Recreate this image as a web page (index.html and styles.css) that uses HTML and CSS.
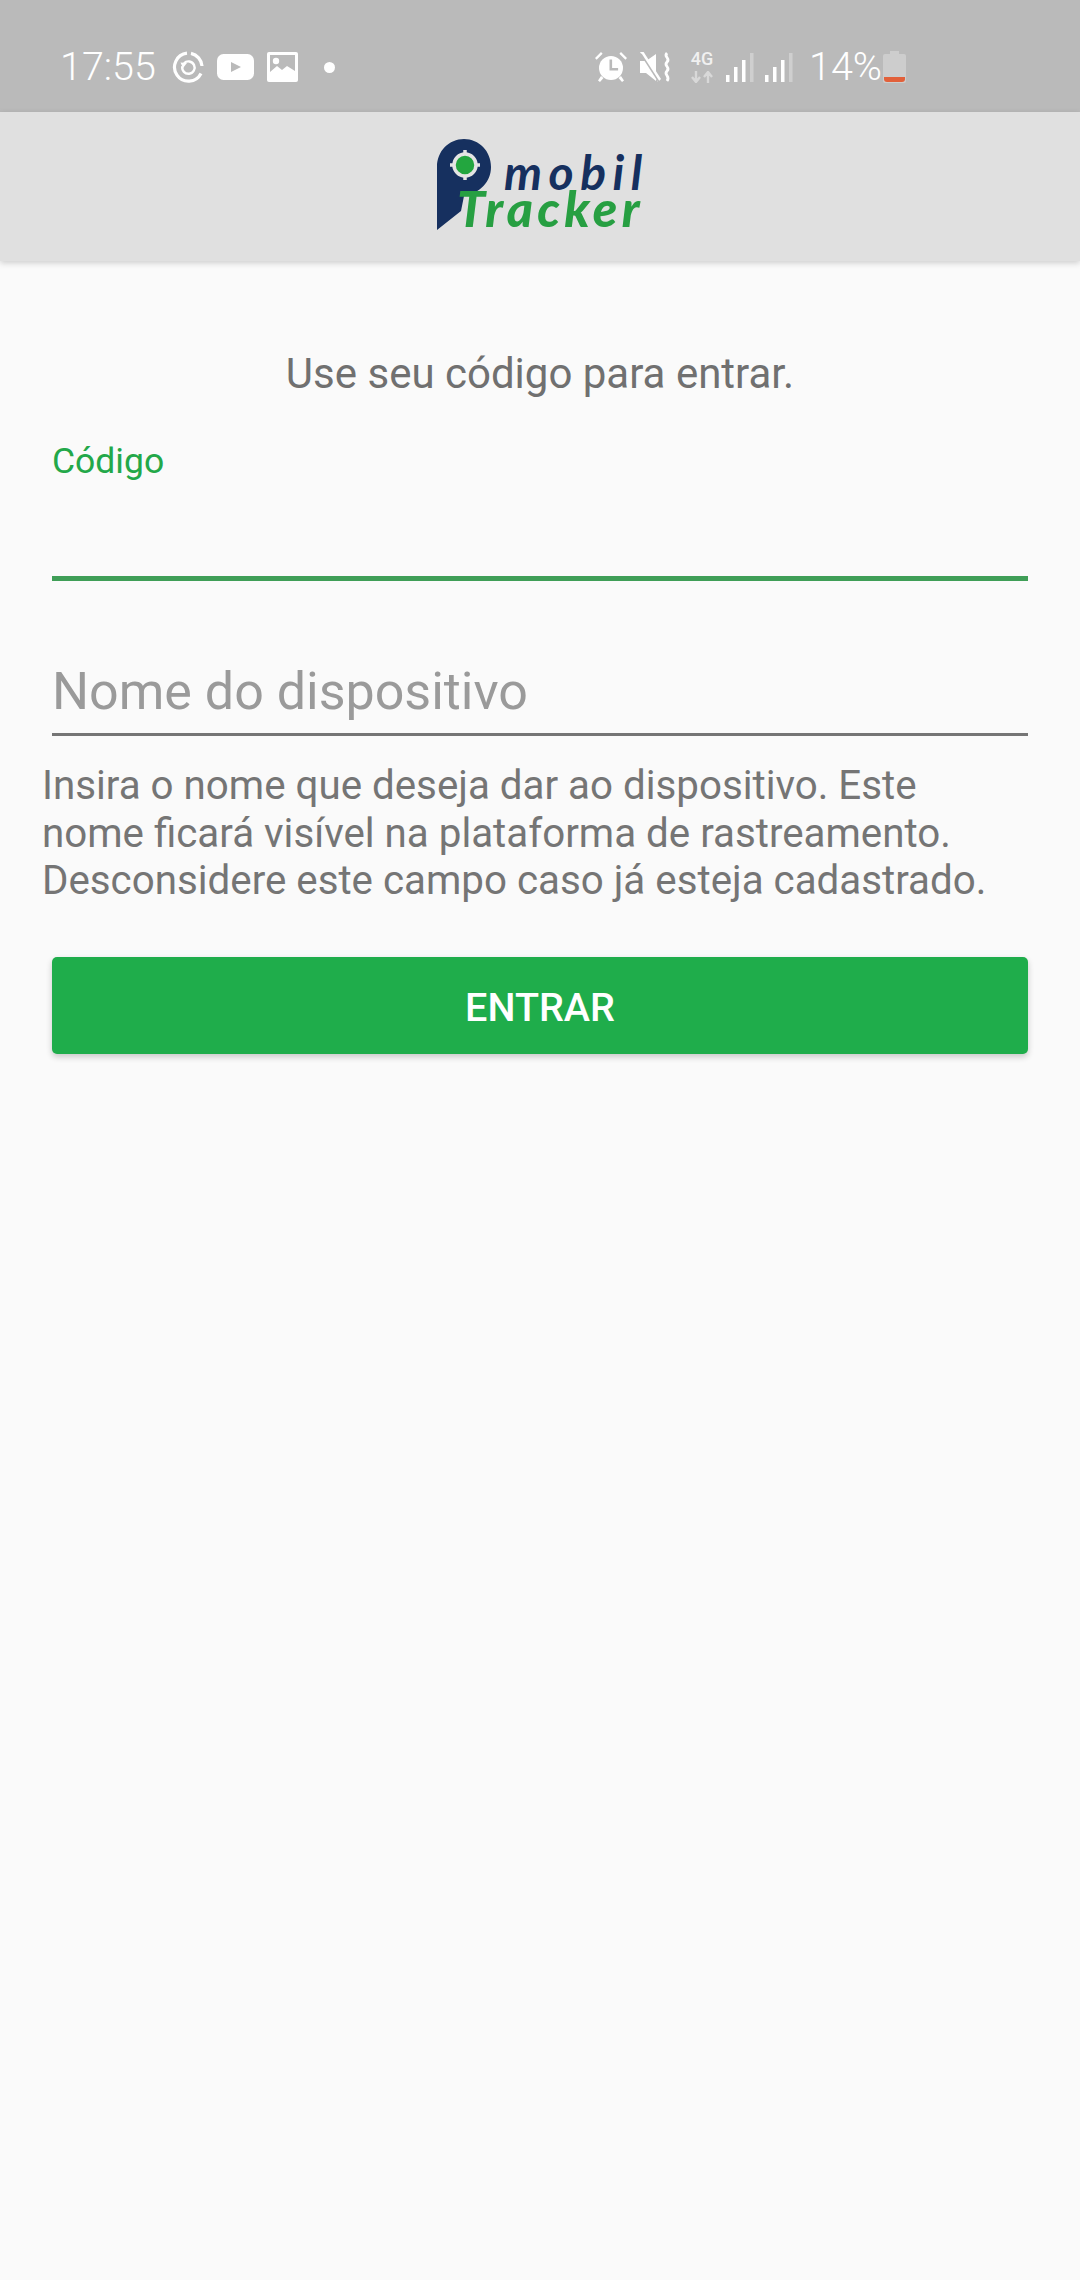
FILE: index.html
```html
<!DOCTYPE html>
<html lang="pt">
<head>
<meta charset="utf-8">
<title>mobil Tracker</title>
<link rel="stylesheet" href="styles.css">
</head>
<body>
<div class="status">
  <div class="status-left">
    <span class="clock">17:55</span>
    <svg class="ic ic-sync" viewBox="0 0 32 32"><path d="M15 2.200A14 14 0 1 0 29 22.500" fill="none" stroke="#fff" stroke-width="3.200"/><path d="M19 2.400A14 14 0 0 1 30 15" fill="none" stroke="#fff" stroke-width="3.200"/><path d="M11 14a6.200 6.200 0 1 1-.5 3.500" fill="none" stroke="#fff" stroke-width="2.400" transform="rotate(20 16.500 16)"/><path d="M8.500 11.500l6.500.5-4 5z" fill="#fff"/></svg>
    <svg class="ic ic-yt" viewBox="0 0 37 26"><rect width="37" height="26" rx="6.500" fill="#fff"/><path d="M14 8l10 5-10 5z" fill="#bababa"/></svg>
    <svg class="ic ic-img" viewBox="0 0 31 30"><rect width="31" height="30" rx="2" fill="#fff"/><rect x="3" y="3" width="25" height="22" fill="#bababa"/><circle cx="9" cy="9" r="3.200" fill="#fff"/><path d="M3 20l7-6 5 4 5-4 8 5v6H3z" fill="#fff"/></svg>
    <span class="dot"></span>
  </div>
  <div class="status-right">
    <svg class="ic ic-alarm" viewBox="0 0 32 32"><circle cx="16" cy="17" r="12" fill="#fff"/><path d="M14.500 8.500h2.600v8.500h6v2.600h-8.600z" fill="#bababa"/><path d="M0 7l6-6 1.600 1.800-6 6zM32 7l-6-6-1.600 1.800 6 6zM6 25l-3 4.500 2 1.500 3.500-4zM26 25l3 4.500-2 1.500-3.500-4z" fill="#fff"/></svg>
    <svg class="ic ic-mute" viewBox="0 0 32 30"><path d="M0 9h6l10-7v27L6 21H0z" fill="#fff"/><path d="M0 0l3-1 18 28-3 3z" fill="#fff"/><path d="M1 2l18 28" stroke="#bababa" stroke-width="1.500"/><path d="M27 1c-4 4 4 5 0 9s4 5 0 9 4 5 0 10" fill="none" stroke="#fff" stroke-width="2.800"/></svg>
    <div class="net"><span class="net-label">4G</span><svg class="ic-arrows" viewBox="0 0 24 12"><path d="M6 0v9M2 6l4 5 4-5M18 12V3M14 6l4-5 4 5" fill="none" stroke="#d8d8d8" stroke-width="2.400"/></svg></div>
    <svg class="ic ic-sig" viewBox="0 0 28 30"><rect x="0" y="23" width="3.500" height="7" fill="#fff"/><rect x="8" y="15" width="3.500" height="15" fill="#fff"/><rect x="16" y="8" width="3.500" height="22" fill="#fff"/><rect x="24" y="1" width="3.500" height="29" fill="#cfcfcf"/></svg>
    <svg class="ic ic-sig" viewBox="0 0 28 30"><rect x="0" y="23" width="3.500" height="7" fill="#fff"/><rect x="8" y="15" width="3.500" height="15" fill="#fff"/><rect x="16" y="8" width="3.500" height="22" fill="#fff"/><rect x="24" y="1" width="3.500" height="29" fill="#cfcfcf"/></svg>
    <span class="pct">14%</span>
    <svg class="ic-bat" viewBox="0 0 23 32"><path d="M7 0h9v3h5a2 2 0 0 1 2 2v25a2 2 0 0 1-2 2H2a2 2 0 0 1-2-2V5a2 2 0 0 1 2-2h5z" fill="#cdcdcd"/><path d="M1 26h21v2a3 3 0 0 1-3 3H4a3 3 0 0 1-3-3z" fill="#e2603a"/></svg>
  </div>
</div>
<header class="appbar">
  <div class="logo">
    <svg class="pin" viewBox="0 0 54 91"><path d="M0 91V28C0 12 12 0 27 0s27 12 27 28c0 15-11 26-27 29l-3 15z" fill="#16305f"/><circle cx="28" cy="26" r="11" fill="#23a63f" stroke="#e4e4e4" stroke-width="3.500"/><path d="M28 11v4M28 37v4M13 26h4M39 26h4" stroke="#e4e4e4" stroke-width="3.500"/></svg>
    <div class="logo-text">
      <span class="logo-mobil">mobil</span>
      <span class="logo-tracker">Tracker</span>
    </div>
  </div>
</header>
<main class="content">
  <p class="intro">Use seu código para entrar.</p>
  <div class="field field-active">
    <span class="label">Código</span>
  </div>
  <div class="field field-idle">
    <span class="placeholder">Nome do dispositivo</span>
  </div>
  <p class="help">Insira o nome que deseja dar ao dispositivo. Este<br>nome ficará visível na plataforma de rastreamento.<br>Desconsidere este campo caso já esteja cadastrado.</p>
  <button class="btn">ENTRAR</button>
</main>
</body>
</html>
```
FILE: styles.css
```css
* { box-sizing: border-box; }
html, body { margin: 0; padding: 0; }
body { width: 1080px; height: 2280px; background: #fafafa; font-family: Roboto, sans-serif; overflow: hidden; }

.status { height: 112px; background: #bababa; padding: 22px 0 0 60px; display: flex; align-items: center; color: #fff; }
.status-left { display: flex; align-items: center; width: 535px; }
.clock { font-size: 39.500px; font-weight: 300; width: 112px; margin-top: -2px; }
.ic { display: block; flex: none; }
.ic-sync { width: 32px; height: 32px; }
.ic-yt { width: 37px; height: 26px; margin-left: 13px; }
.ic-img { width: 31px; height: 30px; margin-left: 13px; }
.dot { width: 11px; height: 11px; border-radius: 50%; background: #fff; margin-left: 26px; }
.status-right { display: flex; align-items: center; }
.ic-alarm { width: 32px; height: 32px; }
.ic-mute { width: 32px; height: 30px; margin-left: 13px; }
.net { width: 26px; margin-left: 17px; display: flex; flex-direction: column; align-items: center; }
.net-label { font-size: 18px; line-height: 15px; font-weight: 500; color: #f0f0f0; }
.ic-arrows { width: 24px; height: 12px; margin-top: 5px; display: block; }
.ic-sig { width: 28px; height: 30px; margin-left: 11px; }
.pct { font-size: 39.500px; font-weight: 300; margin-left: 16px; margin-top: -1px; }
.ic-bat { width: 23px; height: 32px; margin-left: 1px; display: block; }

.appbar { height: 149px; background: #e0e0e0; box-shadow: 0 2px 6px rgba(0,0,0,.18); display: flex; justify-content: center; align-items: center; position: relative; }
.logo { display: flex; width: 206px; height: 91px; margin-bottom: 4px; }
.pin { width: 54px; height: 91px; flex: none; display: block; }
.logo-text { display: flex; flex-direction: column; margin-left: -34px; font-family: Lato, sans-serif; font-style: italic; font-weight: 700; }
.logo-mobil { font-size: 48px; line-height: 40px; height: 37px; color: #16305f; letter-spacing: 6.500px; margin: 13px 0 0 47px; }
.logo-tracker { font-size: 50px; line-height: 38px; color: #279f42; letter-spacing: 4.300px; font-weight: 900; }

.content { padding: 0 52px; display: flex; flex-direction: column; }
.intro { margin: 89px 0 0; text-align: center; font-size: 42px; line-height: 47px; color: #707070; }
.field { display: flex; flex-direction: column; }
.field-active { height: 140px; margin-top: 44px; border-bottom: 5px solid #3f9e57; }
.label { font-size: 35.500px; line-height: 40px; color: #23a849; }
.field-idle { height: 103px; margin-top: 52px; border-bottom: 3px solid #757575; }
.placeholder { font-size: 52px; line-height: 56px; color: #9a9a9a; margin-top: 31px; }
.help { margin: 26px -10px 0 -10px; font-size: 40.300px; line-height: 47.500px; color: #757575; }
.btn { margin-top: 52px; height: 97px; width: 100%; padding: 5px 0 0; background: #1fad4b; border: 0; border-radius: 5px; box-shadow: 0 3px 6px rgba(0,0,0,.2); color: #fff; font-family: Roboto, sans-serif; font-size: 39.500px; font-weight: 500; }
```
